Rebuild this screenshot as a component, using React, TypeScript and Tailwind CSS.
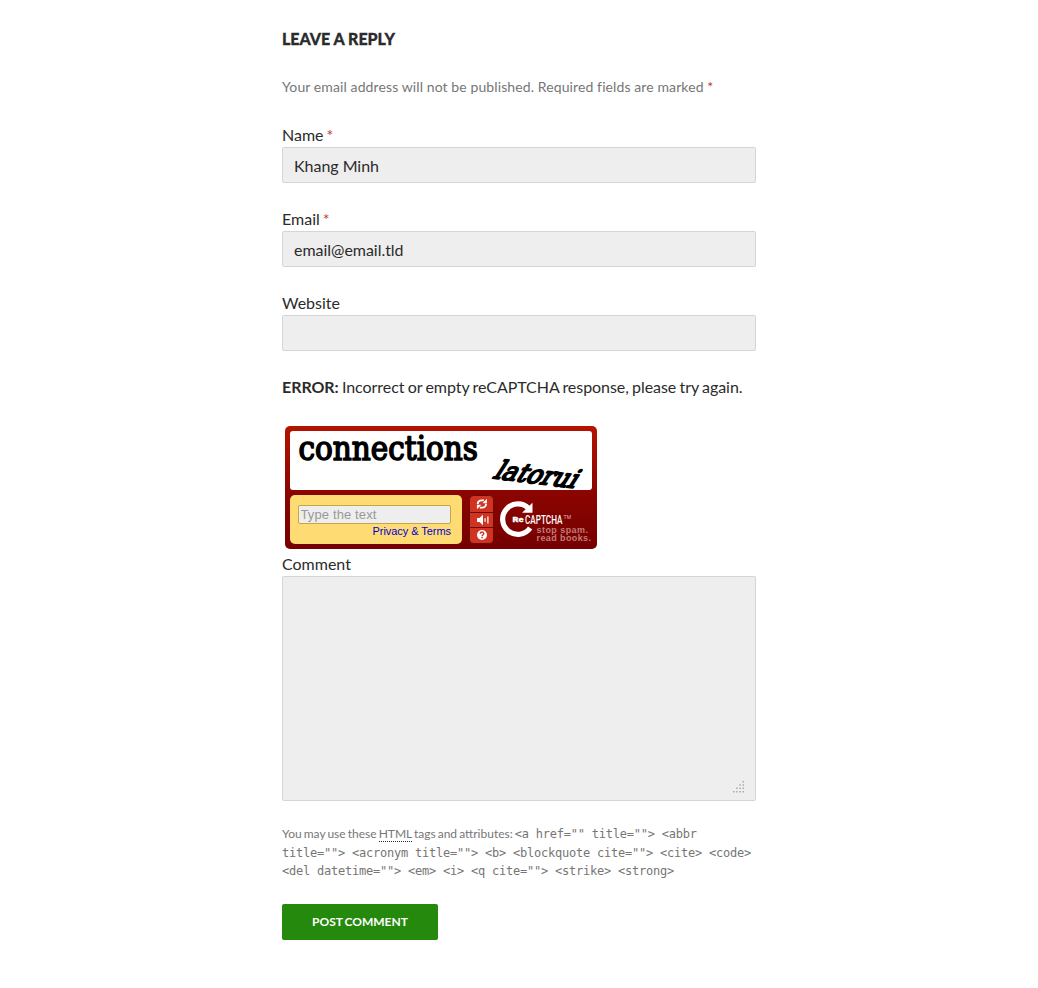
import React from "react";

const field =
  "block h-9 w-full rounded-[2px] border border-black/10 bg-[#eee] px-[11px] pt-px text-base tracking-[-.03px] text-[#2b2b2b] outline-none";

function Field({ label, value, required }: { label: string; value: string; required?: boolean }) {
  return (
    <div className="mb-6">
      <label className="block leading-6 [word-spacing:-1.2px]">
        {label} {required && <span className="text-[#c0392b]">*</span>}
      </label>
      <input className={field} defaultValue={value} aria-label={label} />
    </div>
  );
}

function Challenge() {
  return (
    <svg viewBox="0 0 302 59" className="block h-[59px] w-[302px] overflow-visible">
      <rect width="302" height="59" rx="3" fill="#fff" />
      <text x="8.5" y="28.5" textLength="179.5" lengthAdjust="spacingAndGlyphs" fontSize="34" stroke="#000" strokeWidth="1.7" strokeLinejoin="round" style={{ fontFamily: '"DejaVu Serif", serif' }}>
        connections
      </text>
      <g transform="translate(202 47) rotate(7) skewX(-26)">
        <text x="0" y="0" textLength="82" lengthAdjust="spacingAndGlyphs" fontSize="26" stroke="#000" strokeWidth="1.9" strokeLinejoin="round" style={{ fontFamily: '"DejaVu Serif", serif' }}>
          latorui
        </text>
      </g>
    </svg>
  );
}

function Controls() {
  return (
    <svg viewBox="0 0 25 49" className="block h-[49px] w-[25px]">
      <rect x="0.5" y="0.5" width="24" height="48" rx="4" fill="#cf3322" stroke="#6d0a08" />
      <path d="M1 17.5H24M1 32.5H24" stroke="#6d0a08" />
      <g fill="none" stroke="#fff" strokeWidth="1.9">
        <path d="M8.7 9C8.7 6.6 10.7 5.4 12.6 5.4H15" />
        <path d="M17.1 8.8C17.1 11.2 15.1 12.6 13.2 12.6H10.8" />
      </g>
      <path d="M13.5 8.2H17.9V3.8ZM12.3 9.8H7.9V14.2Z" fill="#fff" />
      <path d="M8 23H10.4L14 19.8V30.2L10.4 27H8Z" fill="#fff" />
      <path d="M16.1 23.3V26.7M18.9 21.5V28.5" stroke="#fff" strokeWidth="1.2" />
      <circle cx="13" cy="40" r="5" fill="#fff" />
      <path d="M11.3 38.8C11.3 36.4 14.8 36.5 14.7 38.7C14.6 39.8 13.1 39.8 13.1 41.2M13.1 42V43.3" fill="none" stroke="#cf3322" strokeWidth="1.5" />
    </svg>
  );
}

function CaptchaLogo() {
  return (
    <svg viewBox="0 0 94 49" className="block h-[49px] w-[94px] overflow-visible">
      <path d="M32.2 33A15.2 15.2 0 1 1 30.7 13.5" fill="none" stroke="#fff" strokeWidth="5.2" />
      <path d="M34.5 7.8V17.7H24Z" fill="#fff" />
      <text x="14.5" y="27" textLength="11" lengthAdjust="spacingAndGlyphs" fontSize="8" fontWeight="900" fill="#fff" stroke="#fff" strokeWidth=".3" style={{ fontFamily: "Roboto, sans-serif" }}>Re</text>
      <text x="27" y="28.5" textLength="37.5" lengthAdjust="spacingAndGlyphs" fontSize="13" fontWeight="500" fill="#fff" style={{ fontFamily: "Roboto, sans-serif" }}>CAPTCHA</text>
      <text x="65.5" y="24" textLength="7.5" lengthAdjust="spacingAndGlyphs" fontSize="5" fill="#dbb" style={{ fontFamily: '"Liberation Sans", sans-serif' }}>TM</text>
      <g fill="#c17c79" fontSize="9" fontWeight="700" style={{ fontFamily: '"Liberation Sans", sans-serif' }}>
        <text x="38.5" y="38" textLength="51.5" lengthAdjust="spacing">stop spam.</text>
        <text x="38.5" y="46" textLength="54.5" lengthAdjust="spacing">read books.</text>
      </g>
    </svg>
  );
}

function Captcha() {
  return (
    <div className="mt-[27px] mb-[3px] ml-[3px] flex h-[123px] w-[312px] flex-col gap-[5px] rounded-[5px] bg-linear-to-b from-[#b41400] via-[#8b0500] via-55% to-[#750000] p-[5px]">
      <Challenge />
      <div className="flex h-[49px]">
        <div className="flex w-[172px] flex-col rounded-[5px] bg-[#ffdc73] px-2 pt-[10px] font-['Liberation_Sans',sans-serif]">
          <input
            placeholder="Type the text"
            aria-label="Type the text"
            className="h-[19px] w-[153px] rounded-[2px] border border-[#c3a84a] bg-[#eee] px-[1.5px] text-[13px] leading-4 tracking-[.12px] outline-none placeholder:text-[#999]"
          />
          <a className="w-[153px] text-right text-[11px] leading-[14px] tracking-[-.05px] whitespace-nowrap text-[#0000cc]">Privacy &amp; Terms</a>
        </div>
        <div className="ml-[7px]"><Controls /></div>
        <div className="ml-[4px]"><CaptchaLogo /></div>
      </div>
    </div>
  );
}

function ResizeGrip() {
  return (
    <svg viewBox="0 0 12 12" className="absolute right-[11px] bottom-[8px] size-3" fill="#aaa">
      <path d="M9.5 0h1.5v1.5H9.5zM9.5 3.3h1.5v1.5H9.5zM6.3 3.3h1.5v1.5H6.3zM9.5 6.6h1.5v1.5H9.5zM6.3 6.6h1.5v1.5H6.3zM3.1 6.6h1.5v1.5H3.1zM9.5 10h1.5v1.5H9.5zM6.3 10h1.5v1.5H6.3zM3.1 10h1.5v1.5H3.1zM0 10h1.5v1.5H0z" />
    </svg>
  );
}

export default function App() {
  return (
    <main className="min-h-[988px] bg-white pt-[27px] font-[Lato,sans-serif] text-base leading-6 text-[#2b2b2b]">
      <form className="mx-auto w-[474px]" onSubmit={(e) => e.preventDefault()}>
        <h3 className="mb-6 text-base leading-6 font-black uppercase [-webkit-text-stroke:0.3px_#2b2b2b]">Leave a Reply</h3>
        <p className="mb-6 text-sm leading-6 tracking-[.12px] [word-spacing:-.1px] text-[#767676]">
          Your email address will not be published. Required fields are marked <span className="text-[#c0392b]">*</span>
        </p>
        <Field label="Name" value="Khang Minh" required />
        <Field label="Email" value="email@email.tld" required />
        <Field label="Website" value="" />
        <p className="tracking-[-.05px] [word-spacing:-.8px]"><strong className="font-bold">ERROR:</strong> Incorrect or empty reCAPTCHA response, please try again.</p>
        <Captcha />
        <label className="block">Comment</label>
        <div className="relative h-[225px]">
          <textarea aria-label="Comment" className="block h-full w-full resize-none rounded-[2px] border border-black/10 bg-[#eee] px-[11px] py-2 outline-none" />
          <ResizeGrip />
        </div>
        <p className="mt-6 text-xs leading-[18.5px] text-[#767676] [word-spacing:-1px]">
          You may use these <abbr className="border-b border-dotted border-[#2b2b2b] no-underline">HTML</abbr> tags and attributes:{" "}
          <code className="font-['DejaVu_Sans_Mono',monospace] text-[12px] tracking-[-.224px] [word-spacing:0px]">
            {'<a href="" title=""> <abbr'}
            <br />
            {'title=""> <acronym title=""> <b> <blockquote cite=""> <cite> <code>'}
            <br />
            {'<del datetime=""> <em> <i> <q cite=""> <strike> <strong>'}
          </code>
        </p>
        <button className="mt-[23px] block h-9 w-[156px] rounded-[2px] bg-[#24890d] text-xs font-bold text-white uppercase [word-spacing:-1px]">Post Comment</button>
      </form>
    </main>
  );
}
